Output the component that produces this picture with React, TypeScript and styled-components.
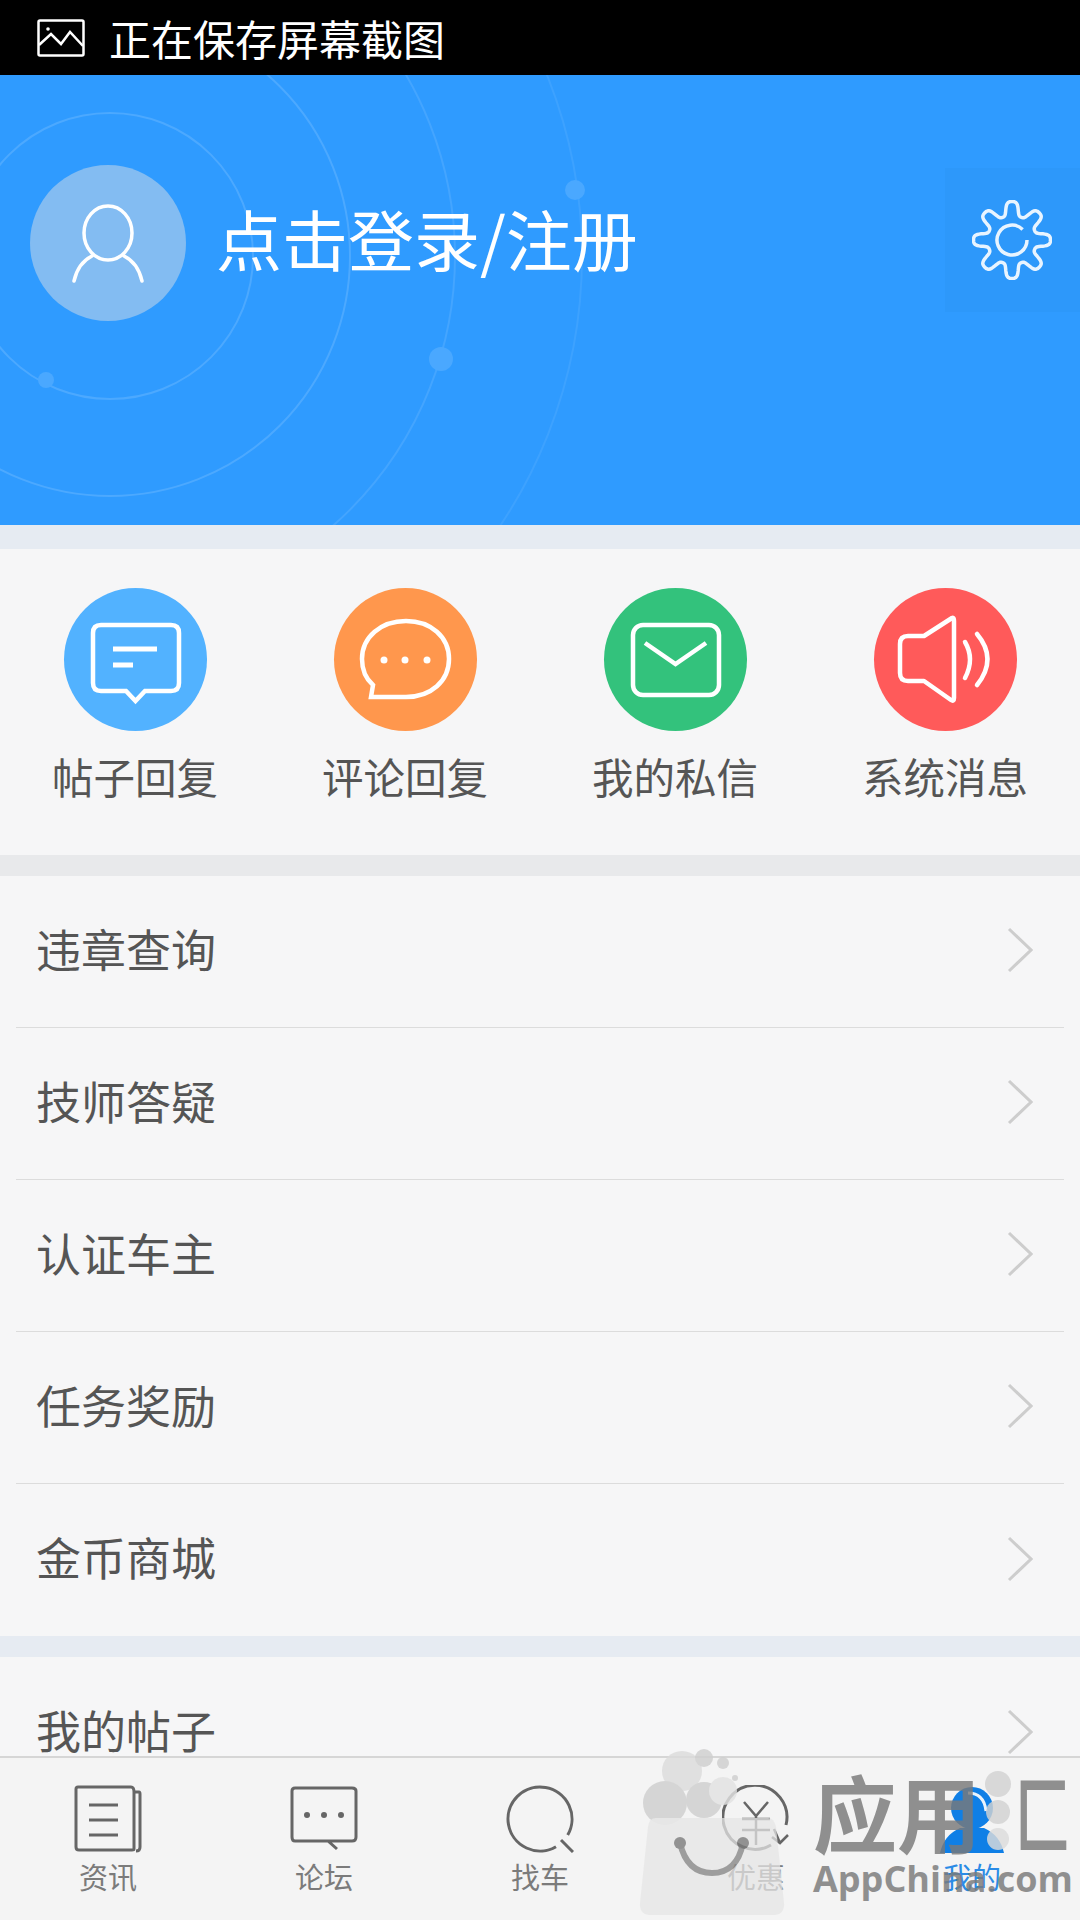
import React from "react";
import styled, { createGlobalStyle } from "styled-components";

const CJK = `"Noto Sans CJK SC", "Noto Sans", sans-serif`;

const GlobalStyle = createGlobalStyle`
  html, body {
    margin: 0;
    padding: 0;
    background: #f6f6f7;
  }
  * {
    box-sizing: border-box;
  }
`;

const menuTop = ["违章查询", "技师答疑", "认证车主", "任务奖励", "金币商城"];

// wavy outline for the settings gear, tanh rounds off the lobes
const gearPath = (() => {
  const pts: string[] = [];
  for (let i = 0; i < 320; i++) {
    const a = (i / 320) * Math.PI * 2 - Math.PI / 2;
    const wave = Math.tanh(1.7 * Math.cos(8 * (a + Math.PI / 2))) / Math.tanh(1.7);
    const r = 31.5 + 7 * wave;
    pts.push(`${(40 + r * Math.cos(a)).toFixed(2)} ${(40 + r * Math.sin(a)).toFixed(2)}`);
  }
  return `M${pts.join("L")}Z`;
})();

const Chevron = () => (
  <ChevronSvg viewBox="0 0 26 46">
    <path d="M2 2 L24 23 L2 44" fill="none" stroke="#cdcdcd" strokeWidth="3" />
  </ChevronSvg>
);

const PostReplyIcon = () => (
  <svg viewBox="0 0 143 143" width="143" height="143" fill="none" stroke="#fff" strokeWidth="4.5">
    <path d="M37 37 H107 Q115 37 115 45 V95 Q115 103 107 103 H81 L71.5 113 L62 103 H37 Q29 103 29 95 V45 Q29 37 37 37 Z" />
    <path d="M49 61 H93 M49 77 H69" strokeWidth="5" />
  </svg>
);

const CommentReplyIcon = () => (
  <svg viewBox="0 0 143 143" width="143" height="143" fill="none" stroke="#fff" strokeWidth="4.5">
    <path d="M37 109 L39 97 C31 90 28 81 28 71 C28 49 47 33 72 33 C97 33 115 49 115 71 C115 93 97 109 72 109 Z" />
    <circle cx="50" cy="72" r="3.5" fill="#fff" stroke="none" />
    <circle cx="71" cy="72" r="3.5" fill="#fff" stroke="none" />
    <circle cx="93" cy="72" r="3.5" fill="#fff" stroke="none" />
  </svg>
);

const PrivateMailIcon = () => (
  <svg viewBox="0 0 143 143" width="143" height="143" fill="none" stroke="#fff" strokeWidth="4.5">
    <rect x="29" y="37" width="86" height="70" rx="10" />
    <path d="M41 55 L71.5 76 L102 55" />
  </svg>
);

const SystemSoundIcon = () => (
  <svg viewBox="0 0 143 143" width="143" height="143" fill="none" stroke="#fff" strokeWidth="4.5">
    <path d="M78 30 Q80 29 80 33 V110 Q80 114 77 112 L50 93 H34 Q26 93 26 85 V56 Q26 48 34 48 H50 Z" strokeLinejoin="round" />
    <path d="M91 54 Q101 71 91 90 M103 46 Q124 71 103 97" strokeLinecap="round" />
  </svg>
);

const NewsIcon = () => (
  <svg viewBox="0 0 68 68" width="68" height="68" fill="none" stroke="#666" strokeWidth="3">
    <path d="M60 7 V64 Q60 65 58 65 H5 Q2 65 2 62 V4 Q2 2 4 2 H57 Q60 2 60 7" />
    <path d="M60 7 H65 Q66 7 66 9 V62 Q66 66 62 66" />
    <path d="M15 20 H44 M15 35 H44 M15 50 H44" />
  </svg>
);

const ForumIcon = () => (
  <svg viewBox="0 0 68 68" width="68" height="68" fill="none" stroke="#666" strokeWidth="3">
    <path d="M38 56 H62 Q66 56 66 52 V6 Q66 3 62 3 H5 Q2 3 2 6 V52 Q2 56 5 56 H38 L47 64" />
    <circle cx="17" cy="30" r="3" fill="#666" stroke="none" />
    <circle cx="34" cy="30" r="3" fill="#666" stroke="none" />
    <circle cx="51" cy="30" r="3" fill="#666" stroke="none" />
  </svg>
);

const SearchIcon = () => (
  <svg viewBox="0 0 68 68" width="68" height="68" fill="none" stroke="#666" strokeWidth="3">
    <path d="M50 61.7 A32 32 0 1 1 61.7 50" />
    <path d="M55 55 L67 67" />
  </svg>
);

const DiscountIcon = () => (
  <svg viewBox="0 0 68 68" width="68" height="68" fill="none" stroke="#666" strokeWidth="3">
    <path d="M49 60 A32 32 0 1 1 64 40" />
    <path d="M22 17 L34 31 L46 17 M20 34 H48 M20 45 H48 M34 31 V60" strokeWidth="2.5" />
    <path d="M52 44 L58 58 M66 50 L58 58 L50 52" strokeWidth="2.5" />
  </svg>
);

const MineIcon = () => (
  <svg viewBox="0 0 68 68" width="68" height="68">
    <circle cx="34" cy="23" r="21" fill="#0f7fe6" />
    <path d="M2 68 Q6 50 22 43 H46 Q62 50 66 68 Z" fill="#0f7fe6" />
    <path d="M30 8 Q46 8 48 26" fill="none" stroke="#eaf4fd" strokeWidth="3" />
  </svg>
);

const tabs = [
  { label: "资讯", icon: <NewsIcon /> },
  { label: "论坛", icon: <ForumIcon /> },
  { label: "找车", icon: <SearchIcon /> },
  { label: "优惠", icon: <DiscountIcon /> },
  { label: "我的", icon: <MineIcon />, active: true },
];

const messages = [
  { label: "帖子回复", color: "#52b2ff", icon: <PostReplyIcon /> },
  { label: "评论回复", color: "#ff974d", icon: <CommentReplyIcon /> },
  { label: "我的私信", color: "#33c27c", icon: <PrivateMailIcon /> },
  { label: "系统消息", color: "#ff5a5a", icon: <SystemSoundIcon /> },
];

export default function App() {
  return (
    <>
      <GlobalStyle />
      <Screen>
        <StatusBar>
          <svg viewBox="0 0 48 38" width="48" height="38" fill="none" stroke="#fff" strokeWidth="2.5">
            <rect x="1.5" y="1.5" width="45" height="35" rx="1.5" />
            <circle cx="11" cy="10" r="1.8" fill="#fff" stroke="none" />
            <path d="M2 26 L14 15 L24 25 L33 13 L46 27" />
          </svg>
          <StatusText>正在保存屏幕截图</StatusText>
        </StatusBar>

        <Content>
          <Header>
            <Orbits viewBox="0 0 1080 450">
              <g fill="none" stroke="#fff" strokeWidth="2">
                <circle cx="110" cy="181" r="143" strokeOpacity="0.14" />
                <circle cx="110" cy="181" r="240" strokeOpacity="0.14" />
                <circle cx="96" cy="181" r="359" strokeOpacity="0.1" />
                <circle cx="97" cy="181" r="485" strokeOpacity="0.07" />
              </g>
              <g fill="#4aa8ff">
                <circle cx="46" cy="305" r="8" />
                <circle cx="441" cy="284" r="12" />
                <circle cx="575" cy="115" r="10" />
              </g>
            </Orbits>
            <ProfileRow>
              <Avatar>
                <svg viewBox="0 0 156 156" width="156" height="156" fill="none" stroke="#fff" strokeWidth="3.5">
                  <ellipse cx="78" cy="68" rx="24" ry="27" />
                  <path d="M44 116 Q48 98 62 91 M112 116 Q108 98 94 91" strokeLinecap="round" />
                </svg>
              </Avatar>
              <LoginText>点击登录/注册</LoginText>
              <SettingsTile>
                <svg viewBox="0 0 80 80" width="80" height="80" fill="none" stroke="#e8f4ff" strokeWidth="3.5">
                  <path d={gearPath} />
                  <path d="M55 40 A15 15 0 1 1 50.6 29.4" />
                </svg>
              </SettingsTile>
            </ProfileRow>
          </Header>

          <BlueGap />

          <MessageGrid>
            {messages.map((m) => (
              <MessageItem key={m.label}>
                <MessageCircle $color={m.color}>{m.icon}</MessageCircle>
                <MessageLabel>{m.label}</MessageLabel>
              </MessageItem>
            ))}
          </MessageGrid>

          <GreyGap />

          {menuTop.map((t, i) => (
            <MenuRow key={t} $last={i === menuTop.length - 1}>
              <MenuText>{t}</MenuText>
              <Chevron />
            </MenuRow>
          ))}

          <BlueGap $small />

          <MenuRow $last>
            <MenuText>我的帖子</MenuText>
            <Chevron />
          </MenuRow>
        </Content>

        <TabBar>
          {tabs.map((t) => (
            <TabItem key={t.label}>
              {t.icon}
              <TabLabel $active={t.active}>{t.label}</TabLabel>
            </TabItem>
          ))}
        </TabBar>

        <Watermark>
          <svg viewBox="0 0 160 170" width="160" height="170">
            <g fill="#cfcfcf">
              <circle cx="44" cy="26" r="20" fill="#dcdcdc" />
              <circle cx="66" cy="13" r="9" />
              <circle cx="85" cy="18" r="6" />
              <circle cx="97" cy="33" r="3" />
              <circle cx="27" cy="58" r="22" />
              <circle cx="66" cy="55" r="18" />
              <circle cx="85" cy="46" r="14" fill="#e2e2e2" />
            </g>
            <path d="M18 73 H130 Q136 73 138 82 L146 158 Q147 170 134 170 H14 Q1 170 2 158 L10 82 Q11 73 18 73 Z" fill="#e6e6e6" fillOpacity="0.9" />
            <path d="M42 98 Q49 128 74 128 Q99 128 105 98" fill="none" stroke="#8a8a8a" strokeWidth="6" />
            <circle cx="42" cy="98" r="6" fill="#7d7d7d" />
            <circle cx="105" cy="98" r="6" fill="#7d7d7d" />
          </svg>
          <BrandBlock>
            <BrandName>
              <span>应用</span>
              <BrandDots viewBox="0 0 30 90" width="30" height="90">
                <circle cx="15" cy="18" r="13" fill="#d2d2d2" />
                <circle cx="15" cy="46" r="12" fill="#d2d2d2" />
                <circle cx="15" cy="73" r="11" fill="#dcdcdc" />
              </BrandDots>
              <BrandBracket>匚</BrandBracket>
            </BrandName>
            <BrandUrl>AppChina.com</BrandUrl>
          </BrandBlock>
        </Watermark>
      </Screen>
    </>
  );
}

const Screen = styled.div`
  position: relative;
  width: 1080px;
  height: 1920px;
  display: flex;
  flex-direction: column;
  overflow: hidden;
  background: #f6f6f7;
  font-family: ${CJK};
`;

const StatusBar = styled.div`
  height: 75px;
  flex: none;
  background: #000;
  display: flex;
  align-items: center;
  padding-left: 37px;
  gap: 24px;
`;

const StatusText = styled.span`
  color: #fff;
  font-size: 42px;
  line-height: 75px;
  font-weight: 400;
`;

const Content = styled.div`
  flex: 1;
  min-height: 0;
  overflow: hidden;
`;

const Header = styled.div`
  position: relative;
  height: 450px;
  background: #2f9bff;
  padding-top: 90px;
  overflow: hidden;
`;

const Orbits = styled.svg`
  position: absolute;
  left: 0;
  top: 0;
  width: 1080px;
  height: 450px;
`;

const ProfileRow = styled.div`
  position: relative;
  display: flex;
  align-items: center;
  height: 156px;
  padding-left: 30px;
`;

const Avatar = styled.div`
  width: 156px;
  height: 156px;
  border-radius: 50%;
  background: #83bcf2;
  flex: none;
`;

const LoginText = styled.div`
  margin: -12px 0 0 30px;
  color: #fff;
  font-size: 66px;
  font-weight: 400;
  line-height: 1;
`;

const SettingsTile = styled.div`
  margin-left: auto;
  width: 135px;
  height: 144px;
  background: #2d98fa;
  display: flex;
  align-items: center;
  justify-content: flex-start;
  padding-left: 27px;
  margin-top: -6px;
`;

const BlueGap = styled.div<{ $small?: boolean }>`
  height: ${({ $small }) => ($small ? 21 : 24)}px;
  background: #e6ebf2;
`;

const GreyGap = styled.div`
  height: 21px;
  background: #e8e9eb;
`;

const MessageGrid = styled.div`
  height: 306px;
  display: grid;
  grid-template-columns: repeat(4, 270px);
  padding-top: 39px;
  background: #f6f6f7;
`;

const MessageItem = styled.div`
  display: flex;
  flex-direction: column;
  align-items: center;
  gap: 17px;
`;

const MessageCircle = styled.div<{ $color: string }>`
  width: 143px;
  height: 143px;
  border-radius: 50%;
  background: ${({ $color }) => $color};
  svg {
    display: block;
  }
`;

const MessageLabel = styled.div`
  font-size: 41.5px;
  line-height: 56px;
  color: #555;
  font-weight: 400;
`;

const MenuRow = styled.div<{ $last?: boolean }>`
  height: 152px;
  margin: 0 16px;
  padding: 0 31px 0 20px;
  display: flex;
  align-items: center;
  justify-content: space-between;
  border-bottom: ${({ $last }) => ($last ? "none" : "1.5px solid #dcdcdc")};
`;

const MenuText = styled.span`
  font-size: 45px;
  line-height: 60px;
  margin-top: -6px;
  color: #555;
  font-weight: 400;
`;

const ChevronSvg = styled.svg`
  width: 26px;
  height: 46px;
  margin-top: -3px;
`;

const TabBar = styled.div`
  height: 164px;
  flex: none;
  background: #f4f4f4;
  border-top: 2px solid #d6d6d6;
  display: flex;
  padding-top: 27px;
`;

const TabItem = styled.div`
  flex: 1;
  display: flex;
  flex-direction: column;
  align-items: center;
  svg {
    display: block;
  }
`;

const TabLabel = styled.span<{ $active?: boolean }>`
  margin-top: 3px;
  font-size: 29px;
  line-height: 40px;
  color: ${({ $active }) => ($active ? "#2a8be6" : "#7b7b7b")};
`;

const Watermark = styled.div`
  position: absolute;
  left: 638px;
  top: 1745px;
  display: flex;
  align-items: flex-start;
  gap: 15px;
  opacity: 0.82;
  pointer-events: none;
`;

const BrandBlock = styled.div`
  display: flex;
  flex-direction: column;
  margin-top: 16px;
  width: 262px;
`;

const BrandName = styled.div`
  display: flex;
  align-items: center;
  font-size: 84px;
  line-height: 100px;
  font-weight: 700;
  color: #7a7a7a;
  white-space: nowrap;
`;

const BrandDots = styled.svg`
  flex: none;
  margin-left: 2px;
  margin-right: 2px;
`;

const BrandBracket = styled.span`
  display: inline-block;
  width: 56px;
  transform: scaleX(0.66);
  transform-origin: left center;
`;

const BrandUrl = styled.div`
  font-family: "Open Sans", "Liberation Sans", sans-serif;
  font-size: 36px;
  line-height: 36px;
  font-weight: 700;
  color: #7a7a7a;
  margin-top: 0;
  white-space: nowrap;
`;
